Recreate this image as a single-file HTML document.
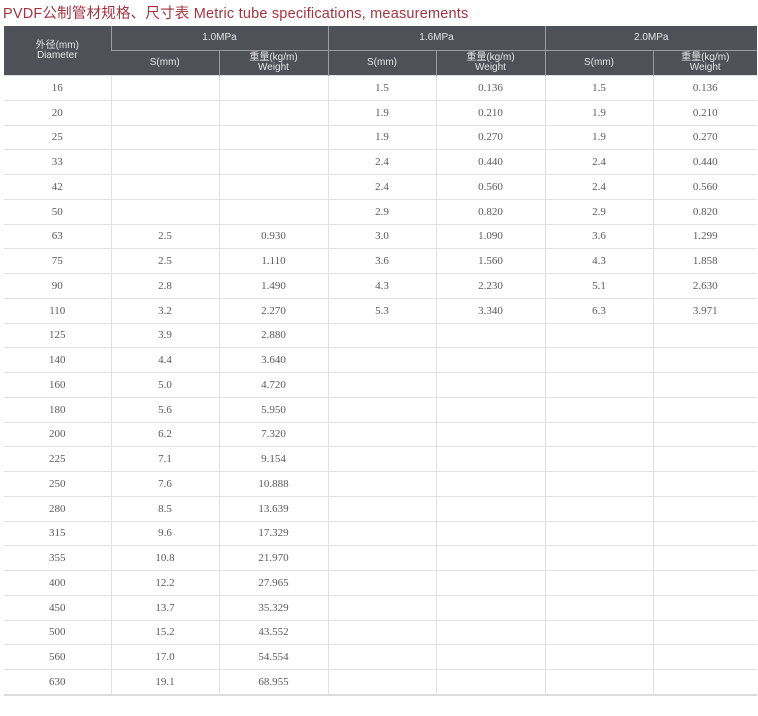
<!DOCTYPE html>
<html><head><meta charset="utf-8"><style>
body{margin:0;background:#fff;width:758px;height:716px;overflow:hidden;position:relative;font-family:"Liberation Sans","Noto Sans CJK SC",sans-serif}
.t{position:absolute;left:3px;top:2px;font-size:14.5px;color:#a3343f;white-space:nowrap;letter-spacing:0.2px}
table{position:absolute;left:4px;top:26px;border-collapse:collapse;table-layout:fixed;width:753px}
td,th{padding:0;text-align:center;overflow:hidden;white-space:nowrap}
th{background:#4e5158;color:#e4e4e6;font-weight:normal;font-size:10px;line-height:10px;border-left:1px solid #9a9ca0}
th:first-child{border-left:none}
tr.h1 th{height:24px}
tr.h2 th{height:24px;border-top:1px solid #9a9ca0}
td{height:23.76px;border-top:1px solid #e2e2e2;border-left:1px solid #e0e0e0;font-family:"Liberation Serif",serif;font-size:11px;color:#5a5a5a}
td:first-child{border-left:none}
tr:last-child td{border-bottom:2px solid #dcdcdc}
</style></head><body>
<div class="t">PVDF公制管材规格、尺寸表 Metric tube specifications, measurements</div>
<table>
<colgroup><col style="width:107px"><col style="width:108px"><col style="width:109px"><col style="width:108px"><col style="width:109px"><col style="width:108px"><col style="width:104px"></colgroup>
<tr class="h1"><th rowspan="2">外径(mm)<br>Diameter</th><th colspan="2">1.0MPa</th><th colspan="2">1.6MPa</th><th colspan="2">2.0MPa</th></tr>
<tr class="h2"><th>S(mm)</th><th>重量(kg/m)<br>Weight</th><th>S(mm)</th><th>重量(kg/m)<br>Weight</th><th>S(mm)</th><th>重量(kg/m)<br>Weight</th></tr>
<tr><td>16</td><td></td><td></td><td>1.5</td><td>0.136</td><td>1.5</td><td>0.136</td></tr>
<tr><td>20</td><td></td><td></td><td>1.9</td><td>0.210</td><td>1.9</td><td>0.210</td></tr>
<tr><td>25</td><td></td><td></td><td>1.9</td><td>0.270</td><td>1.9</td><td>0.270</td></tr>
<tr><td>33</td><td></td><td></td><td>2.4</td><td>0.440</td><td>2.4</td><td>0.440</td></tr>
<tr><td>42</td><td></td><td></td><td>2.4</td><td>0.560</td><td>2.4</td><td>0.560</td></tr>
<tr><td>50</td><td></td><td></td><td>2.9</td><td>0.820</td><td>2.9</td><td>0.820</td></tr>
<tr><td>63</td><td>2.5</td><td>0.930</td><td>3.0</td><td>1.090</td><td>3.6</td><td>1.299</td></tr>
<tr><td>75</td><td>2.5</td><td>1.110</td><td>3.6</td><td>1.560</td><td>4.3</td><td>1.858</td></tr>
<tr><td>90</td><td>2.8</td><td>1.490</td><td>4.3</td><td>2.230</td><td>5.1</td><td>2.630</td></tr>
<tr><td>110</td><td>3.2</td><td>2.270</td><td>5.3</td><td>3.340</td><td>6.3</td><td>3.971</td></tr>
<tr><td>125</td><td>3.9</td><td>2.880</td><td></td><td></td><td></td><td></td></tr>
<tr><td>140</td><td>4.4</td><td>3.640</td><td></td><td></td><td></td><td></td></tr>
<tr><td>160</td><td>5.0</td><td>4.720</td><td></td><td></td><td></td><td></td></tr>
<tr><td>180</td><td>5.6</td><td>5.950</td><td></td><td></td><td></td><td></td></tr>
<tr><td>200</td><td>6.2</td><td>7.320</td><td></td><td></td><td></td><td></td></tr>
<tr><td>225</td><td>7.1</td><td>9.154</td><td></td><td></td><td></td><td></td></tr>
<tr><td>250</td><td>7.6</td><td>10.888</td><td></td><td></td><td></td><td></td></tr>
<tr><td>280</td><td>8.5</td><td>13.639</td><td></td><td></td><td></td><td></td></tr>
<tr><td>315</td><td>9.6</td><td>17.329</td><td></td><td></td><td></td><td></td></tr>
<tr><td>355</td><td>10.8</td><td>21.970</td><td></td><td></td><td></td><td></td></tr>
<tr><td>400</td><td>12.2</td><td>27.965</td><td></td><td></td><td></td><td></td></tr>
<tr><td>450</td><td>13.7</td><td>35.329</td><td></td><td></td><td></td><td></td></tr>
<tr><td>500</td><td>15.2</td><td>43.552</td><td></td><td></td><td></td><td></td></tr>
<tr><td>560</td><td>17.0</td><td>54.554</td><td></td><td></td><td></td><td></td></tr>
<tr><td>630</td><td>19.1</td><td>68.955</td><td></td><td></td><td></td><td></td></tr>
</table>
</body></html>
